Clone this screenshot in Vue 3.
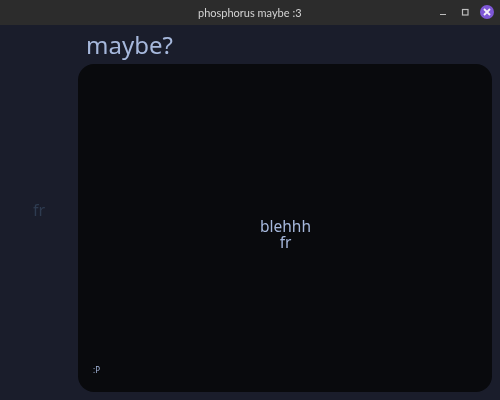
<template>
  <div class="window">
    <header class="titlebar">
      <span class="title">phosphorus maybe :3</span>
      <div class="controls">
        <svg class="min" width="10" height="10" viewBox="0 0 10 10"><path d="M2 7.5h6" stroke="#bdbdbd" stroke-width="1" fill="none" /></svg>
        <svg width="10" height="10" viewBox="0 0 10 10"><rect x="2.5" y="2.5" width="5.5" height="5.5" stroke="#bdbdbd" stroke-width="1.2" fill="none" /></svg>
        <span class="close">
          <svg width="10" height="10" viewBox="0 0 10 10"><path d="M2 2l6 6M8 2l-6 6" stroke="#f4effb" stroke-width="1.8" fill="none" /></svg>
        </span>
      </div>
    </header>
    <div class="content">
      <aside class="sidebar"><span class="soft">fr</span></aside>
      <main class="main">
        <h1 class="soft">maybe?</h1>
        <section class="panel">
          <p class="center soft">blehhh<br />fr</p>
          <small class="soft">:P</small>
        </section>
      </main>
    </div>
  </div>
</template>

<script setup>
</script>

<style scoped>
.window {
  width: 500px;
  height: 400px;
  display: flex;
  flex-direction: column;
  background: #1a1d2b;
  font-family: "Noto Sans", sans-serif;
  overflow: hidden;
}

/* own layer, so the text is antialiased in grey like the reference */
.soft {
  will-change: transform;
}

.titlebar {
  height: 25px;
  flex: none;
  background: #2c2c2c;
  display: flex;
  align-items: center;
  justify-content: center;
  position: relative;
}

.title {
  color: #d4d4d4;
  font-family: Lato, sans-serif;
  font-size: 11px;
  will-change: transform;
}

.controls {
  position: absolute;
  right: 6px;
  top: 5px;
  display: flex;
  align-items: center;
  gap: 10px;
}

.min {
  margin-right: 2px;
}

.close {
  width: 14px;
  height: 14px;
  border-radius: 50%;
  background: #7e57d6;
  display: flex;
  align-items: center;
  justify-content: center;
}

.content {
  flex: 1;
  display: flex;
  min-height: 0;
}

.sidebar {
  width: 78px;
  flex: none;
  display: flex;
  align-items: center;
  justify-content: center;
  padding-bottom: 5px;
  box-sizing: border-box;
  color: #2e3b50;
  font-size: 16px;
}

.main {
  flex: 1;
  display: flex;
  flex-direction: column;
  padding-right: 8px;
  padding-bottom: 8px;
  min-width: 0;
}

h1 {
  margin: 0;
  height: 39px;
  padding-left: 8px;
  color: #a6b8dc;
  font-size: 24px;
  font-weight: 400;
  line-height: 39px;
}

.panel {
  flex: 1;
  background: #090a0d;
  border-radius: 16px;
  display: flex;
  align-items: center;
  justify-content: center;
  position: relative;
}

.center {
  margin: 0;
  padding: 12px 0 0 1px;
  text-align: center;
  color: #a6b8dc;
  font-size: 15.5px;
  line-height: 16px;
}

small {
  position: absolute;
  left: 15px;
  bottom: 17px;
  color: #a6b8dc;
  font-size: 8px;
}
</style>
